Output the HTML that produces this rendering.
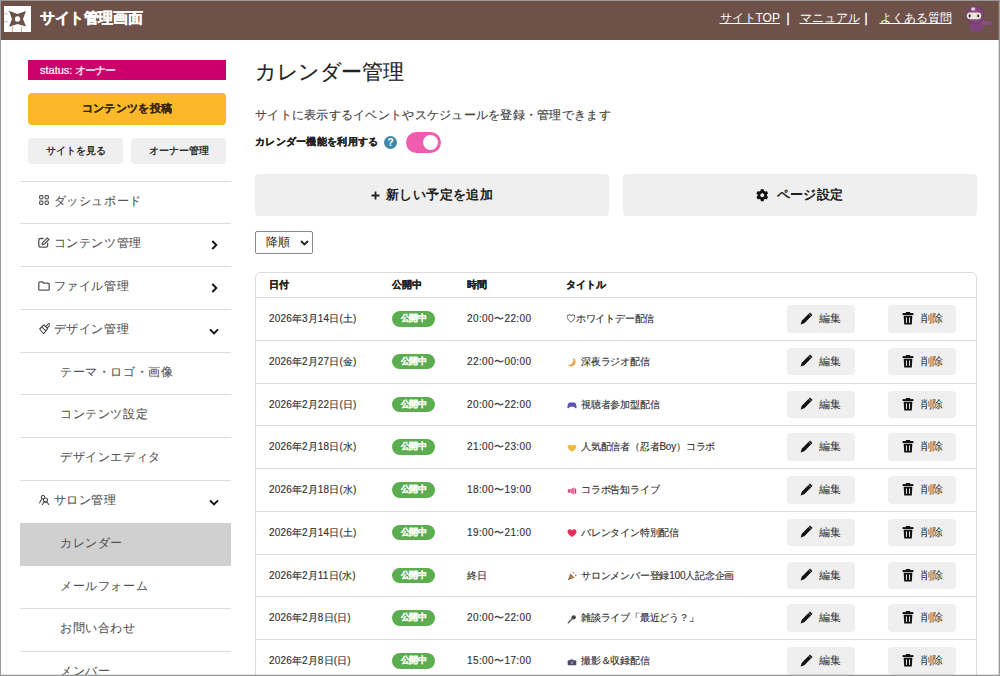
<!DOCTYPE html>
<html lang="ja">
<head>
<meta charset="utf-8">
<style>
*{box-sizing:border-box;margin:0;padding:0}
html,body{width:1000px;height:676px;overflow:hidden;background:#fff}
body{font-family:"Liberation Sans",sans-serif;color:#333;position:relative}
.frame{position:absolute;left:0;top:0;width:1000px;height:676px;border:1px solid #9a9a9a;box-shadow:inset -1px 0 0 rgba(154,154,154,.35),inset 0 -1px 0 rgba(154,154,154,.3);pointer-events:none;z-index:50}
.hdr{position:absolute;left:0;top:0;width:1000px;height:40px;background:#6e5249}
.logo{position:absolute;left:4px;top:6px;width:27px;height:26px}
.htitle{position:absolute;left:40px;top:7.5px;font-size:15px;font-weight:bold;color:#fff;line-height:20px;white-space:nowrap;-webkit-text-stroke:.35px #fff;letter-spacing:-.4px}
.hlinks{position:absolute;left:719.5px;top:9.5px;font-size:12px;color:#fff;line-height:17px;white-space:nowrap}
.hlinks a{color:#fff;text-decoration:underline;position:absolute;top:0}
.hlinks .sep{position:absolute;top:0;-webkit-text-stroke:.4px #fff}
.avatar{position:absolute;left:964px;top:5px;width:30px;height:28px}

.side{position:absolute;left:20px;top:40px;width:211px}
.status{position:absolute;left:8px;top:20px;width:198px;height:20px;background:#cc006a;color:#fff;font-size:11px;line-height:20px;padding-left:12px;white-space:nowrap;-webkit-text-stroke:.2px #fff}
.post{position:absolute;left:8px;top:53px;width:198px;height:32px;background:#fbb829;border-radius:4px;font-size:11px;font-weight:bold;color:#38280f;text-align:center;line-height:30px;-webkit-text-stroke:.2px #38280f;letter-spacing:.3px}
.sbtn{position:absolute;top:98px;width:95px;height:26px;background:#efefef;border-radius:4px;font-size:10px;font-weight:bold;color:#333;text-align:center;line-height:26px}
.menu{position:absolute;left:0;top:140.5px;width:211px}
.mi{height:42.8px;border-top:1px solid #dcdcdc;position:relative;font-size:12px;color:#555;line-height:38px;-webkit-text-stroke:.1px #555;white-space:nowrap}
.mi .ic{position:absolute;left:18px;top:14px;width:12px;height:12px}
.mi .tx{position:absolute;left:33.6px;top:0;letter-spacing:.6px}
.mi.sub .tx{left:40px}
.mi.act{background:#d0d0d0;border-top-color:#d0d0d0}
.mi .chev{position:absolute;left:189px;top:16px;width:9px;height:10px}

.main{position:absolute;left:255px;top:40px;width:722px}
.title{position:absolute;left:0;letter-spacing:-.4px;top:18px;font-size:21px;line-height:28px;color:#222;white-space:nowrap;-webkit-text-stroke:.15px #222}
.desc{position:absolute;left:0;top:66px;font-size:12px;letter-spacing:.27px;line-height:18px;color:#444;white-space:nowrap;-webkit-text-stroke:.15px #444}
.tgl{position:absolute;left:0;top:93px;font-size:10px;letter-spacing:.3px;-webkit-text-stroke:.2px #222;font-weight:bold;line-height:18px;color:#222;white-space:nowrap}
.q{position:absolute;left:128.8px;top:95.5px;width:13.4px;height:13.4px;border-radius:50%;background:#3f87a6;color:#fff;font-size:10px;font-weight:bold;text-align:center;line-height:13.4px}
.sw{position:absolute;left:151px;top:92px;width:35px;height:21px;border-radius:11px;background:#ef5db0}
.sw i{position:absolute;left:16.8px;top:3px;width:15px;height:15px;border-radius:50%;background:#fff}
.bigbtn{position:absolute;top:134px;width:353.5px;height:42px;background:#efefef;border-radius:4px;font-size:13px;font-weight:bold;color:#222;text-align:center;line-height:42px;white-space:nowrap}
.bt{position:absolute;top:0}
.sel{position:absolute;left:0;top:190.5px;width:57.5px;height:23.5px;border:1px solid #8a8a8a;border-radius:2px;font-size:12px;line-height:21px;padding-left:10px;color:#222}
.sel svg{position:absolute;left:44px;top:8px}

.tbl{position:absolute;left:0;top:231.5px;width:722px;height:460px;border:1px solid #dcdcdc;border-radius:6px;overflow:hidden}
.tr{position:absolute;left:0;width:720px;border-top:1px solid #dcdcdc}
.th{font-size:10px;font-weight:bold;color:#222;position:absolute;top:5px;white-space:nowrap;line-height:14px;-webkit-text-stroke:.2px #222}
.td{font-size:10px;color:#333;position:absolute;top:13px;white-space:nowrap;line-height:16px;-webkit-text-stroke:.15px #333}
.dt{letter-spacing:.15px}
.tm{letter-spacing:.4px}
.ti{letter-spacing:-.2px}
.badge{position:absolute;left:136px;top:13px;width:43px;height:15.5px;border-radius:8px;background:#5cad4f;color:#fff;font-size:9px;font-weight:bold;text-align:center;line-height:15.5px;letter-spacing:-.4px;-webkit-text-stroke:.15px #fff}
.eb{position:absolute;top:7.2px;width:67.5px;height:27.5px;background:#efefef;border-radius:4px;font-size:11px;color:#333;line-height:27px;white-space:nowrap}
.eb svg{position:absolute;top:8px}
.eb span{position:absolute;top:0}
.emi{position:absolute;top:16.5px;width:10px;height:10px}
.emo{width:10px;height:10px;display:block}
</style>
</head>
<body>
<div class="frame"></div>
<div class="hdr">
  <svg class="logo" viewBox="0 0 27 26">
    <rect x="0" y="0" width="27" height="26" fill="#fff"/>
    <path d="M5 4.7 L13.5 7.9 L22 5 L19 13 L22 20.5 L13.5 18.1 L5 20.8 L8 13 Z" fill="#6e5249"/>
    <circle cx="13.5" cy="13" r="2.7" fill="#fff"/>
    <path d="M0 7.8 H3.5 M0 15.8 H4 M8.3 20.5 V26 M17.5 20.5 V26" stroke="#a89088" stroke-width=".7"/>
  </svg>
  <div class="htitle">サイト管理画面</div>
  <div class="hlinks"><a style="left:0">サイトTOP</a><span class="sep" style="left:67px">|</span><a style="left:80px">マニュアル</a><span class="sep" style="left:145px">|</span><a style="left:160px">よくある質問</a></div>
  <svg class="avatar" viewBox="0 0 30 28">
    <path d="M6 19 C5 24 7.5 27 12.5 27 C17 27 19.5 25 19 19Z" fill="#80457f"/>
    <path d="M18 15.5 L27.8 17 L27 19.5 L17.5 20.5Z" fill="#8a4d88"/>
    <circle cx="11.2" cy="10" r="9" fill="#84487f"/>
    <circle cx="11.2" cy="10" r="8.4" fill="none" stroke="#6a3466" stroke-width=".8"/>
    <rect x="2.7" y="7.4" width="14.5" height="6.8" rx="3.4" fill="#eee4da"/>
    <ellipse cx="5.6" cy="10.8" rx="1" ry="1.6" fill="#222"/>
    <ellipse cx="14.2" cy="10.8" rx="1" ry="1.6" fill="#2a3a22"/>
    <rect x="7.3" y="2.5" width="3.8" height="3" fill="#e6cce2"/>
  </svg>
</div>

<div class="side">
  <div class="status">status: <span style="letter-spacing:-1px">オーナー</span></div>
  <div class="post">コンテンツを投稿</div>
  <div class="sbtn" style="left:8px">サイトを見る</div>
  <div class="sbtn" style="left:111px">オーナー管理</div>
  <div class="menu">
    <div class="mi"><svg class="ic" viewBox="0 0 10 10" style="left:19px;top:13.5px;width:10px;height:10px"><g fill="none" stroke="#555" stroke-width="1.1"><rect x=".6" y=".6" width="3.3" height="3.3" rx=".9"/><rect x="6.1" y=".6" width="3.3" height="3.3" rx=".9"/><rect x=".6" y="6.1" width="3.3" height="3.3" rx=".9"/><rect x="6.1" y="6.1" width="3.3" height="3.3" rx=".9"/></g></svg><span class="tx">ダッシュボード</span></div>
    <div class="mi"><svg class="ic" viewBox="0 0 12 11" style="left:18px;top:13px;width:12px;height:11px"><g fill="none" stroke="#555" stroke-width="1.3" stroke-linejoin="round"><path d="M5.5 1.5 H2.2 C1.3 1.5 .8 2 .8 2.9 V8.8 C.8 9.6 1.3 10.2 2.2 10.2 H8.2 C9 10.2 9.6 9.6 9.6 8.8 V5.8"/><path d="M9.3 .9 L10.9 2.5 L6.2 7.2 L4.2 7.6 L4.6 5.6 Z"/></g></svg><span class="tx">コンテンツ管理</span><svg class="chev" viewBox="0 0 7 10" style="left:190.5px;top:15.5px;width:7px;height:10px"><path d="M1.3 1 L5.3 5 L1.3 9" fill="none" stroke="#111" stroke-width="1.9"/></svg></div>
    <div class="mi"><svg class="ic" viewBox="0 0 12 10" style="left:18px;top:13.5px;width:12px;height:10px"><path d="M.8 2 C.8 1.3 1.3 .8 2 .8 H4.5 L5.8 2.2 H10 C10.7 2.2 11.2 2.7 11.2 3.4 V8 C11.2 8.7 10.7 9.2 10 9.2 H2 C1.3 9.2 .8 8.7 .8 8 Z" fill="none" stroke="#555" stroke-width="1.3" stroke-linejoin="round"/></svg><span class="tx">ファイル管理</span><svg class="chev" viewBox="0 0 7 10" style="left:190.5px;top:15.5px;width:7px;height:10px"><path d="M1.3 1 L5.3 5 L1.3 9" fill="none" stroke="#111" stroke-width="1.9"/></svg></div>
    <div class="mi"><svg class="ic" viewBox="0 0 11.5 11.5" style="left:18.5px;top:13px;width:11.5px;height:11.5px"><g fill="#fff" stroke="#444" stroke-width="1.05" stroke-linejoin="round"><path d="M6.3 3.9 L9.3 .9 C9.7 .5 10.4 .5 10.8 .9 C11.2 1.3 11.2 2 10.8 2.4 L7.8 5.4Z"/><path d="M.7 6 L4.9 1.9 L8.7 5.7 L4.6 10.8 Z"/><path d="M2.8 3.9 L6.7 7.8" fill="none"/></g></svg><span class="tx">デザイン管理</span><svg class="chev" viewBox="0 0 10 7" style="left:189px;top:18px;width:10px;height:7px"><path d="M1 1.3 L5 5.3 L9 1.3" fill="none" stroke="#111" stroke-width="1.9"/></svg></div>
    <div class="mi sub"><span class="tx">テーマ・ロゴ・画像</span></div>
    <div class="mi sub"><span class="tx">コンテンツ設定</span></div>
    <div class="mi sub"><span class="tx">デザインエディタ</span></div>
    <div class="mi"><svg class="ic" viewBox="0 0 10.5 10.5" style="left:19px;top:13.8px;width:10.5px;height:10.5px"><g fill="none" stroke="#444" stroke-width="1.05" stroke-linecap="round"><circle cx="4" cy="2.3" r="1.8"/><path d="M.7 7.9 C1.1 6.4 1.6 5.4 2.4 4.7"/><circle cx="6.5" cy="4.9" r="2" fill="#fff"/><path d="M3.3 9.8 C3.9 7.9 5 7 6.5 7 C8 7 9.1 7.9 9.7 9.8"/></g></svg><span class="tx">サロン管理</span><svg class="chev" viewBox="0 0 10 7" style="left:189px;top:18px;width:10px;height:7px"><path d="M1 1.3 L5 5.3 L9 1.3" fill="none" stroke="#111" stroke-width="1.9"/></svg></div>
    <div class="mi sub act"><span class="tx">カレンダー</span></div>
    <div class="mi sub" style="border-top-color:transparent"><span class="tx">メールフォーム</span></div>
    <div class="mi sub"><span class="tx">お問い合わせ</span></div>
    <div class="mi sub"><span class="tx">メンバー</span></div>
  </div>
</div>

<div class="main">
  <div class="title">カレンダー管理</div>
  <div class="desc">サイトに表示するイベントやスケジュールを登録・管理できます</div>
  <div class="tgl">カレンダー機能を利用する</div>
  <div class="q">?</div>
  <div class="sw"><i></i></div>
  <div class="bigbtn" style="left:0"><svg width="9" height="9" viewBox="0 0 9 9" style="position:absolute;left:116px;top:16.5px"><path d="M4.5 .5 V8.5 M.5 4.5 H8.5" stroke="#222" stroke-width="1.8"/></svg><span class="bt" style="left:131px;letter-spacing:.4px">新しい予定を追加</span></div>
  <div class="bigbtn" style="left:368px"><svg width="12.5" height="12.5" viewBox="0 0 512 512" style="position:absolute;left:133px;top:15px"><path fill="#111" d="M487.4 315.7l-42.6-24.6c4.3-23.2 4.3-47 0-70.2l42.6-24.6c4.9-2.8 7.1-8.6 5.5-14-11.1-35.6-30-67.8-54.7-94.6-3.8-4.1-10-5.1-14.8-2.3L380.8 110c-17.9-15.4-38.5-27.3-60.8-35.1V25.8c0-5.6-3.9-10.5-9.4-11.7-36.7-8.200-74.3-7.8-109.2 0-5.500 1.2-9.4 6.1-9.4 11.7V75c-22.2 7.9-42.8 19.8-60.8 35.1L88.7 85.5c-4.9-2.8-11-1.9-14.8 2.3-24.7 26.7-43.6 58.9-54.7 94.6-1.7 5.4.6 11.2 5.5 14L67.3 221c-4.3 23.2-4.3 47 0 70.2l-42.6 24.6c-4.9 2.8-7.1 8.6-5.5 14 11.1 35.6 30 67.8 54.7 94.6 3.8 4.1 10 5.1 14.8 2.3l42.6-24.6c17.9 15.4 38.5 27.3 60.8 35.1v49.2c0 5.6 3.9 10.5 9.4 11.7 36.7 8.2 74.3 7.8 109.2 0 5.5-1.2 9.4-6.1 9.4-11.7v-49.2c22.200-7.9 42.8-19.8 60.8-35.1l42.6 24.6c4.9 2.8 11 1.9 14.8-2.3 24.7-26.7 43.6-58.9 54.7-94.6 1.5-5.5-.7-11.3-5.6-14.1zM256 336c-44.1 0-80-35.9-80-80s35.9-80 80-80 80 35.9 80 80-35.9 80-80 80z"/></svg><span class="bt" style="left:153.5px;letter-spacing:.35px">ページ設定</span></div>
  <div class="sel">降順<svg width="9" height="6" viewBox="0 0 9 6"><path d="M1 1 L4.5 4.5 L8 1" stroke="#222" stroke-width="1.8" fill="none"/></svg></div>
  <div class="tbl" id="tbl">
<div class="tr" style="top:0;height:24.5px;border-top:none"><span class="th" style="left:13px">日付</span><span class="th" style="left:136px">公開中</span><span class="th" style="left:211px">時間</span><span class="th" style="left:310px">タイトル</span></div>
<div class="tr" style="top:24.5px;height:42.75px"><span class="td dt" style="left:13px">2026年3月14日(土)</span><span class="badge">公開中</span><span class="td tm" style="left:211px">20:00〜22:00</span><span class="td ti" style="left:310px">♡ホワイトデー配信</span><span class="eb" style="left:531px"><svg width="13" height="13" viewBox="0 0 13 13" style="left:12.5px;top:6.5px"><path d="M10 .5 L12.5 3 L4.3 11.2 L.6 12.4 L1.8 8.7 Z" fill="#111"/><path d="M8.6 1.9 L11.1 4.4" stroke="#efefef" stroke-width=".5"/></svg><span style="left:32px">編集</span></span><span class="eb" style="left:632px"><svg width="12" height="13" viewBox="0 0 11 12" style="left:13.5px;top:7px"><rect x=".5" y="1" width="10" height="1.8" fill="#111"/><rect x="3.5" y="0" width="4" height="1.5" fill="#111"/><path d="M1.5 3.5 H9.5 L9 11.5 H2 Z" fill="#111"/><rect x="3.6" y="5" width=".9" height="5" fill="#efefef"/><rect x="6.5" y="5" width=".9" height="5" fill="#efefef"/></svg><span style="left:33px">削除</span></span></div>
<div class="tr" style="top:67.2px;height:42.75px"><span class="td dt" style="left:13px">2026年2月27日(金)</span><span class="badge">公開中</span><span class="td tm" style="left:211px">22:00〜00:00</span><span class="emi" style="left:311px"><svg class="emo" viewBox="0 0 12 12"><path d="M7.5 .8 C11 2.5 11.5 8 7.5 10.6 C5 12 2 11 .8 9.2 C4.5 10 8.5 7 7.5 .8Z" fill="#f2a54a"/></svg></span><span class="td ti" style="left:325px">深夜ラジオ配信</span><span class="eb" style="left:531px"><svg width="13" height="13" viewBox="0 0 13 13" style="left:12.5px;top:6.5px"><path d="M10 .5 L12.5 3 L4.3 11.2 L.6 12.4 L1.8 8.7 Z" fill="#111"/><path d="M8.6 1.9 L11.1 4.4" stroke="#efefef" stroke-width=".5"/></svg><span style="left:32px">編集</span></span><span class="eb" style="left:632px"><svg width="12" height="13" viewBox="0 0 11 12" style="left:13.5px;top:7px"><rect x=".5" y="1" width="10" height="1.8" fill="#111"/><rect x="3.5" y="0" width="4" height="1.5" fill="#111"/><path d="M1.5 3.5 H9.5 L9 11.5 H2 Z" fill="#111"/><rect x="3.6" y="5" width=".9" height="5" fill="#efefef"/><rect x="6.5" y="5" width=".9" height="5" fill="#efefef"/></svg><span style="left:33px">削除</span></span></div>
<div class="tr" style="top:110.0px;height:42.75px"><span class="td dt" style="left:13px">2026年2月22日(日)</span><span class="badge">公開中</span><span class="td tm" style="left:211px">20:00〜22:00</span><span class="emi" style="left:311px"><svg class="emo" viewBox="0 0 12 12"><path d="M3 3 H9 C10.5 3 11.5 7 11.5 9 C11.5 10 10.5 10.3 9.8 9.6 L8.5 8 H3.5 L2.2 9.6 C1.5 10.3 .5 10 .5 9 C.5 7 1.5 3 3 3Z" fill="#5a4fb0"/></svg></span><span class="td ti" style="left:325px">視聴者参加型配信</span><span class="eb" style="left:531px"><svg width="13" height="13" viewBox="0 0 13 13" style="left:12.5px;top:6.5px"><path d="M10 .5 L12.5 3 L4.3 11.2 L.6 12.4 L1.8 8.7 Z" fill="#111"/><path d="M8.6 1.9 L11.1 4.4" stroke="#efefef" stroke-width=".5"/></svg><span style="left:32px">編集</span></span><span class="eb" style="left:632px"><svg width="12" height="13" viewBox="0 0 11 12" style="left:13.5px;top:7px"><rect x=".5" y="1" width="10" height="1.8" fill="#111"/><rect x="3.5" y="0" width="4" height="1.5" fill="#111"/><path d="M1.5 3.5 H9.5 L9 11.5 H2 Z" fill="#111"/><rect x="3.6" y="5" width=".9" height="5" fill="#efefef"/><rect x="6.5" y="5" width=".9" height="5" fill="#efefef"/></svg><span style="left:33px">削除</span></span></div>
<div class="tr" style="top:152.8px;height:42.75px"><span class="td dt" style="left:13px">2026年2月18日(水)</span><span class="badge">公開中</span><span class="td tm" style="left:211px">21:00〜23:00</span><span class="emi" style="left:311px"><svg class="emo" viewBox="0 0 12 12"><path d="M6 10.5 C3 8.5 .8 6.5 .8 4.5 C.8 2.8 2 2 3.3 2 C4.5 2 5.4 2.7 6 3.4 C6.6 2.7 7.5 2 8.7 2 C10 2 11.2 2.8 11.2 4.5 C11.2 6.5 9 8.5 6 10.5Z" fill="#f0b840"/></svg></span><span class="td ti" style="left:325px">人気配信者（忍者Boy）コラボ</span><span class="eb" style="left:531px"><svg width="13" height="13" viewBox="0 0 13 13" style="left:12.5px;top:6.5px"><path d="M10 .5 L12.5 3 L4.3 11.2 L.6 12.4 L1.8 8.7 Z" fill="#111"/><path d="M8.6 1.9 L11.1 4.4" stroke="#efefef" stroke-width=".5"/></svg><span style="left:32px">編集</span></span><span class="eb" style="left:632px"><svg width="12" height="13" viewBox="0 0 11 12" style="left:13.5px;top:7px"><rect x=".5" y="1" width="10" height="1.8" fill="#111"/><rect x="3.5" y="0" width="4" height="1.5" fill="#111"/><path d="M1.5 3.5 H9.5 L9 11.5 H2 Z" fill="#111"/><rect x="3.6" y="5" width=".9" height="5" fill="#efefef"/><rect x="6.5" y="5" width=".9" height="5" fill="#efefef"/></svg><span style="left:33px">削除</span></span></div>
<div class="tr" style="top:195.5px;height:42.75px"><span class="td dt" style="left:13px">2026年2月18日(水)</span><span class="badge">公開中</span><span class="td tm" style="left:211px">18:00〜19:00</span><span class="emi" style="left:311px"><svg class="emo" viewBox="0 0 12 12"><rect x="1" y="4" width="3" height="4" fill="#d04a80"/><path d="M4 4 L9 1.5 V10.5 L4 8Z" fill="#e86a9a"/><rect x="9.5" y="3" width="1.5" height="6" fill="#c03a70"/></svg></span><span class="td ti" style="left:325px">コラボ告知ライブ</span><span class="eb" style="left:531px"><svg width="13" height="13" viewBox="0 0 13 13" style="left:12.5px;top:6.5px"><path d="M10 .5 L12.5 3 L4.3 11.2 L.6 12.4 L1.8 8.7 Z" fill="#111"/><path d="M8.6 1.9 L11.1 4.4" stroke="#efefef" stroke-width=".5"/></svg><span style="left:32px">編集</span></span><span class="eb" style="left:632px"><svg width="12" height="13" viewBox="0 0 11 12" style="left:13.5px;top:7px"><rect x=".5" y="1" width="10" height="1.8" fill="#111"/><rect x="3.5" y="0" width="4" height="1.5" fill="#111"/><path d="M1.5 3.5 H9.5 L9 11.5 H2 Z" fill="#111"/><rect x="3.6" y="5" width=".9" height="5" fill="#efefef"/><rect x="6.5" y="5" width=".9" height="5" fill="#efefef"/></svg><span style="left:33px">削除</span></span></div>
<div class="tr" style="top:238.2px;height:42.75px"><span class="td dt" style="left:13px">2026年2月14日(土)</span><span class="badge">公開中</span><span class="td tm" style="left:211px">19:00〜21:00</span><span class="emi" style="left:311px"><svg class="emo" viewBox="0 0 12 12"><path d="M6 10.8 C3 8.8 .6 6.6 .6 4.4 C.6 2.6 1.9 1.6 3.3 1.6 C4.5 1.6 5.4 2.3 6 3.1 C6.6 2.3 7.5 1.6 8.7 1.6 C10.1 1.6 11.4 2.6 11.4 4.4 C11.4 6.6 9 8.8 6 10.8Z" fill="#e0305a"/></svg></span><span class="td ti" style="left:325px">バレンタイン特別配信</span><span class="eb" style="left:531px"><svg width="13" height="13" viewBox="0 0 13 13" style="left:12.5px;top:6.5px"><path d="M10 .5 L12.5 3 L4.3 11.2 L.6 12.4 L1.8 8.7 Z" fill="#111"/><path d="M8.6 1.9 L11.1 4.4" stroke="#efefef" stroke-width=".5"/></svg><span style="left:32px">編集</span></span><span class="eb" style="left:632px"><svg width="12" height="13" viewBox="0 0 11 12" style="left:13.5px;top:7px"><rect x=".5" y="1" width="10" height="1.8" fill="#111"/><rect x="3.5" y="0" width="4" height="1.5" fill="#111"/><path d="M1.5 3.5 H9.5 L9 11.5 H2 Z" fill="#111"/><rect x="3.6" y="5" width=".9" height="5" fill="#efefef"/><rect x="6.5" y="5" width=".9" height="5" fill="#efefef"/></svg><span style="left:33px">削除</span></span></div>
<div class="tr" style="top:281.0px;height:42.75px"><span class="td dt" style="left:13px">2026年2月11日(水)</span><span class="badge">公開中</span><span class="td tm" style="left:211px">終日</span><span class="emi" style="left:311px"><svg class="emo" viewBox="0 0 12 12"><path d="M1 11 L4 3 L9 8Z" fill="#8a6a50"/><path d="M3 6 L7 9" stroke="#f0b040" stroke-width="1.2"/><circle cx="8" cy="2.5" r="1" fill="#e86ab0"/><circle cx="10.5" cy="5" r="1" fill="#6a8ae0"/><circle cx="6" cy="1.5" r=".8" fill="#f0c040"/></svg></span><span class="td ti" style="left:325px">サロンメンバー登録100人記念企画</span><span class="eb" style="left:531px"><svg width="13" height="13" viewBox="0 0 13 13" style="left:12.5px;top:6.5px"><path d="M10 .5 L12.5 3 L4.3 11.2 L.6 12.4 L1.8 8.7 Z" fill="#111"/><path d="M8.6 1.9 L11.1 4.4" stroke="#efefef" stroke-width=".5"/></svg><span style="left:32px">編集</span></span><span class="eb" style="left:632px"><svg width="12" height="13" viewBox="0 0 11 12" style="left:13.5px;top:7px"><rect x=".5" y="1" width="10" height="1.8" fill="#111"/><rect x="3.5" y="0" width="4" height="1.5" fill="#111"/><path d="M1.5 3.5 H9.5 L9 11.5 H2 Z" fill="#111"/><rect x="3.6" y="5" width=".9" height="5" fill="#efefef"/><rect x="6.5" y="5" width=".9" height="5" fill="#efefef"/></svg><span style="left:33px">削除</span></span></div>
<div class="tr" style="top:323.8px;height:42.75px"><span class="td dt" style="left:13px">2026年2月8日(日)</span><span class="badge">公開中</span><span class="td tm" style="left:211px">20:00〜22:00</span><span class="emi" style="left:311px"><svg class="emo" viewBox="0 0 12 12"><path d="M1.5 10.5 L6.5 5.5" stroke="#555" stroke-width="1.6" stroke-linecap="round"/><circle cx="8" cy="4" r="2.6" fill="#444"/></svg></span><span class="td ti" style="left:325px">雑談ライブ「最近どう？」</span><span class="eb" style="left:531px"><svg width="13" height="13" viewBox="0 0 13 13" style="left:12.5px;top:6.5px"><path d="M10 .5 L12.5 3 L4.3 11.2 L.6 12.4 L1.8 8.7 Z" fill="#111"/><path d="M8.6 1.9 L11.1 4.4" stroke="#efefef" stroke-width=".5"/></svg><span style="left:32px">編集</span></span><span class="eb" style="left:632px"><svg width="12" height="13" viewBox="0 0 11 12" style="left:13.5px;top:7px"><rect x=".5" y="1" width="10" height="1.8" fill="#111"/><rect x="3.5" y="0" width="4" height="1.5" fill="#111"/><path d="M1.5 3.5 H9.5 L9 11.5 H2 Z" fill="#111"/><rect x="3.6" y="5" width=".9" height="5" fill="#efefef"/><rect x="6.5" y="5" width=".9" height="5" fill="#efefef"/></svg><span style="left:33px">削除</span></span></div>
<div class="tr" style="top:366.5px;height:42.75px"><span class="td dt" style="left:13px">2026年2月8日(日)</span><span class="badge">公開中</span><span class="td tm" style="left:211px">15:00〜17:00</span><span class="emi" style="left:311px"><svg class="emo" viewBox="0 0 12 12"><rect x=".8" y="4" width="10.4" height="6" rx="1" fill="#4a4a6a"/><rect x="3.5" y="3" width="4" height="1.5" fill="#4a4a6a"/><circle cx="6" cy="7" r="1.6" fill="#8a8ab0"/></svg></span><span class="td ti" style="left:325px">撮影＆収録配信</span><span class="eb" style="left:531px"><svg width="13" height="13" viewBox="0 0 13 13" style="left:12.5px;top:6.5px"><path d="M10 .5 L12.5 3 L4.3 11.2 L.6 12.4 L1.8 8.7 Z" fill="#111"/><path d="M8.6 1.9 L11.1 4.4" stroke="#efefef" stroke-width=".5"/></svg><span style="left:32px">編集</span></span><span class="eb" style="left:632px"><svg width="12" height="13" viewBox="0 0 11 12" style="left:13.5px;top:7px"><rect x=".5" y="1" width="10" height="1.8" fill="#111"/><rect x="3.5" y="0" width="4" height="1.5" fill="#111"/><path d="M1.5 3.5 H9.5 L9 11.5 H2 Z" fill="#111"/><rect x="3.6" y="5" width=".9" height="5" fill="#efefef"/><rect x="6.5" y="5" width=".9" height="5" fill="#efefef"/></svg><span style="left:33px">削除</span></span></div>
</div>
</div>
</body>
</html>
